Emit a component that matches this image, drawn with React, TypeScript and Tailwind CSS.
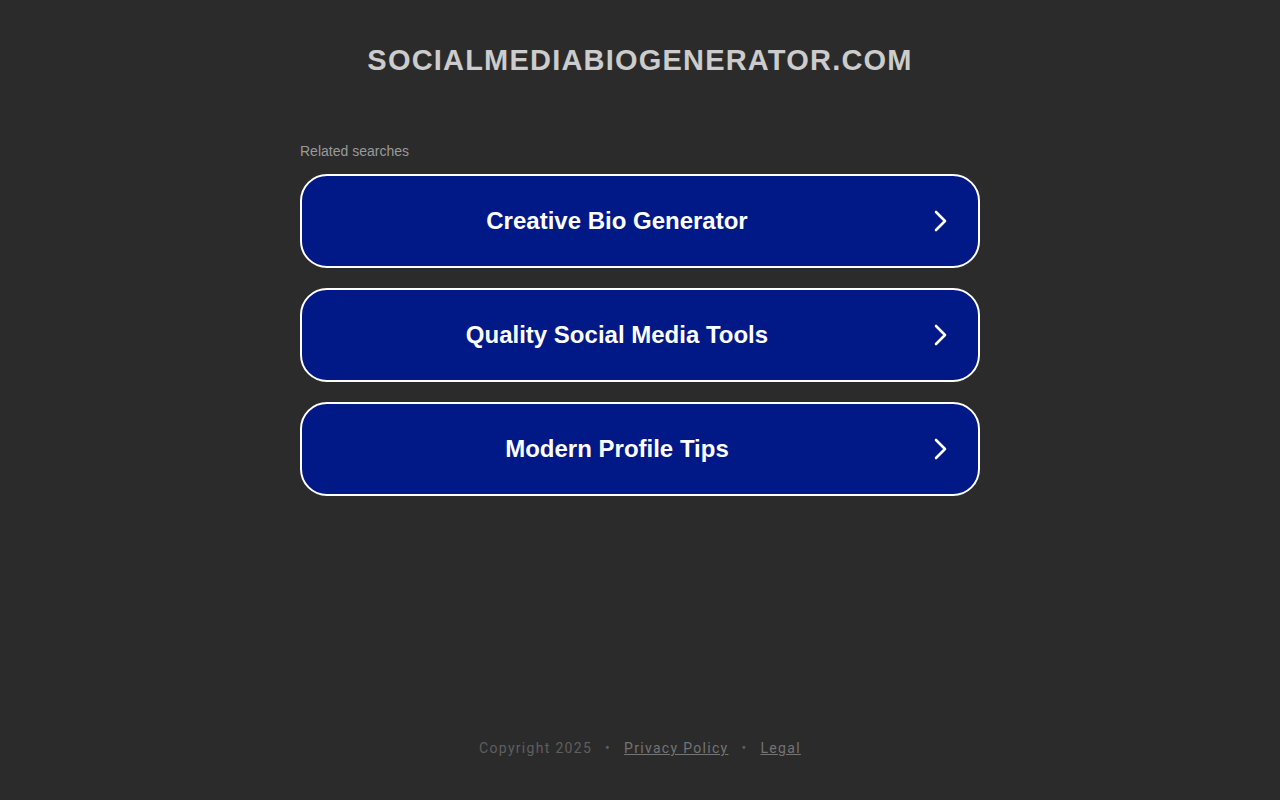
import React from 'react';

const searches = ['Creative Bio Generator', 'Quality Social Media Tools', 'Modern Profile Tips'];

const Chevron = () => (
  <svg width="16" height="24" viewBox="0 0 16 24" fill="none" className="shrink-0">
    <path d="M4 3l9 9-9 9" stroke="#ffffff" strokeWidth="2.6" strokeLinecap="round" strokeLinejoin="round" />
  </svg>
);

const App = () => {
  return (
    <div
      className="min-h-screen h-[800px] bg-[#2b2b2b] flex flex-col items-center"
      style={{ fontFamily: '"Liberation Sans", Arial, sans-serif' }}
    >
      {/* Domain title */}
      <h1 className="mt-[41px] text-[29px] leading-[38px] font-bold text-[#cccccc] tracking-[1.2px]">
        SOCIALMEDIABIOGENERATOR.COM
      </h1>

      {/* Related searches */}
      <div className="mt-[64px] w-[680px]">
        <p className="text-[14px] leading-[16px] text-[#9a9a9a]">Related searches</p>
        <div className="mt-[15px] flex flex-col gap-5">
          {searches.map((s) => (
            <a
              key={s}
              href="#"
              className="h-[94px] flex items-center rounded-[27px] border-2 border-white bg-[#011887] pr-[30px]"
            >
              <span className="flex-1 text-center text-[24px] font-bold text-white">{s}</span>
              <Chevron />
            </a>
          ))}
        </div>
      </div>

      {/* Footer */}
      <div
        className="mt-auto mb-[44px] flex items-center text-[14px] leading-[16px] tracking-[1.3px] text-[#5f5f5f]"
        style={{ fontFamily: 'Roboto, "Liberation Sans", sans-serif' }}
      >
        <span>Copyright 2025</span>
        <span className="mx-[13px]">•</span>
        <a href="#" className="underline text-[#747474]">Privacy Policy</a>
        <span className="mx-[13px]">•</span>
        <a href="#" className="underline text-[#747474]">Legal</a>
      </div>
    </div>
  );
};

export default App;
